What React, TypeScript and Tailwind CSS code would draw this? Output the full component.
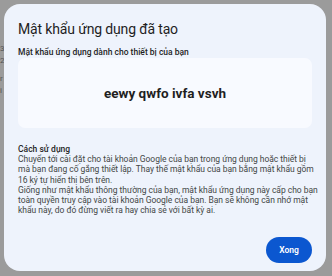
import React from "react";

const lines = [
  "Chuyển tới cài đặt cho tài khoản Google của bạn trong ứng dụng hoặc thiết bị",
  "mà bạn đang cố gắng thiết lập. Thay thế mật khẩu của bạn bằng mật khẩu gồm",
  "16 ký tự hiển thị bên trên.",
  "Giống như mật khẩu thông thường của bạn, mật khẩu ứng dụng này cấp cho bạn",
  "toàn quyền truy cập vào tài khoản Google của bạn. Bạn sẽ không cần nhớ mật",
  "khẩu này, do đó đừng viết ra hay chia sẻ với bất kỳ ai.",
];

export default function App() {
  return (
    <div
      className="w-[332px] h-[276px] bg-[#9b9b9b] overflow-hidden flex"
      style={{ fontFamily: "Roboto, 'Noto Sans', Arial, sans-serif" }}
    >
      <div className="w-[4px] flex flex-col pt-[44px] gap-[3px] text-[8px] leading-[9px] text-[#555] overflow-hidden">
        <span>3</span>
        <span>2</span>
        <span className="mt-[6px]">r</span>
        <span>i</span>
      </div>
      <div className="mt-[4px] w-[322px] h-[267px] rounded-[16px] bg-[#eef3fc] flex flex-col px-[14px] pt-[16px]">
        <div className="text-[14px] leading-[18px] tracking-[-0.15px] text-[#1f1f1f]">Mật khẩu ứng dụng đã tạo</div>
        <div className="mt-[9px] text-[8.5px] leading-[10px] font-medium text-[#1f1f1f]">
          Mật khẩu ứng dụng dành cho thiết bị của bạn
        </div>
        <div className="mt-[1px] h-[70px] rounded-[7px] bg-[#f8faff] flex items-center justify-center">
          <span className="text-[13.5px] font-bold text-[#1f1f1f]">eewy qwfo ivfa vsvh</span>
        </div>
        <div className="mt-[16px] text-[8.5px] leading-[10px] font-medium text-[#1f1f1f]">Cách sử dụng</div>
        <div className="text-[8.5px] leading-[10.3px] tracking-[-0.03px] text-[#444746]">
          {lines.map((l, i) => (
            <div key={i} className="whitespace-nowrap">{l}</div>
          ))}
        </div>
        <div className="mt-auto mb-[8px] flex justify-end">
          <button className="w-[46px] h-[26px] rounded-full bg-[#0b57d0] text-white text-[8.5px] font-semibold">
            Xong
          </button>
        </div>
      </div>
    </div>
  );
}
